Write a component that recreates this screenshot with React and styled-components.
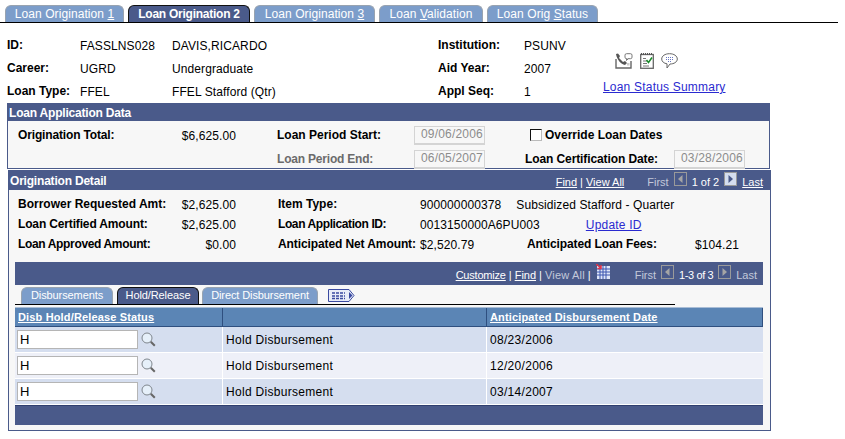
import React from 'react';
import styled, { createGlobalStyle } from 'styled-components';

const NAVY = '#4a5a8a';

const GlobalStyle = createGlobalStyle`
  html, body { margin: 0; padding: 0; background: #fff; }
  body { font-family: "Liberation Sans", Arial, sans-serif; font-size: 12px; color: #000; }
`;

const Page = styled.div`
  width: 845px;
  padding-top: 5px;
`;

const TabBar = styled.div`
  display: flex;
  width: ${({ $width }) => $width}px;
  height: ${({ $height }) => $height}px;
  box-sizing: border-box;
  padding-left: ${({ $pad }) => $pad}px;
  margin-top: ${({ $top }) => $top || 0}px;
  border-bottom: 1px solid #000;
  align-items: flex-end;
`;

const Tab = styled.div`
  width: ${({ $width }) => $width}px;
  margin-right: ${({ $gap }) => $gap}px;
  height: 100%;
  box-sizing: border-box;
  text-align: center;
  font-size: ${({ $small }) => ($small ? 11 : 12)}px;
  line-height: ${({ $small }) => ($small ? 15 : 16)}px;
  letter-spacing: ${({ $small, $active }) => ($small ? -0.1 : $active ? -0.25 : 0.08)}px;
  font-weight: ${({ $active, $small }) => ($active && !$small ? 'bold' : 'normal')};
  color: #fff;
  background: ${({ $active }) => ($active ? NAVY : '#7c9dca')};
  border: 1px solid ${({ $active }) => ($active ? '#111' : '#98a3b0')};
  border-bottom: none;
  border-radius: 6px 6px 0 0;
`;

const Header = styled.div`
  display: grid;
  grid-template-columns: 73px 92px 266px 86px 79px 180px;
  grid-template-rows: 22px 24px 22px;
  align-items: center;
  padding: 11px 0 1px 7px;
`;

const Label = styled.div`
  font-weight: bold;
  letter-spacing: ${({ $track }) => $track || 0}px;
  white-space: nowrap;
  color: ${({ $muted }) => ($muted ? '#6b6b6b' : '#000')};
  grid-column: ${({ $col }) => $col || 'auto'};
`;

const Value = styled.div`
  white-space: nowrap;
  letter-spacing: 0.1px;
  padding-top: 1px;
  text-align: ${({ $right }) => ($right ? 'right' : 'left')};
  grid-column: ${({ $col }) => $col || 'auto'};
`;

const Note = styled.span`
  margin-left: ${({ $gap }) => $gap}px;
`;

const DocLink = styled.a`
  color: #2a2ad0;
  text-decoration: underline;
  letter-spacing: 0.2px;
`;

const StatusBlock = styled.div`
  grid-column: 6;
  grid-row: 1 / span 3;
  align-self: start;
  display: flex;
  flex-direction: column;
  padding-top: 19px;
`;

const IconRow = styled.div`
  display: flex;
  align-items: center;
  gap: 7px;
  height: 16px;
  margin: 0 0 11px 12px;
`;

const Panel = styled.section`
  box-sizing: border-box;
  width: 763px;
  margin-left: ${({ $left }) => $left}px;
  margin-bottom: ${({ $bottom }) => $bottom || 0}px;
  height: ${({ $height }) => $height}px;
  background: #f7f7f7;
  border: 1px solid ${NAVY};
`;

const PanelHead = styled.div`
  display: flex;
  align-items: center;
  justify-content: space-between;
  height: ${({ $height }) => $height}px;
  padding: 0 7px 0 1px;
  background: ${NAVY};
  color: #fff;
  font-weight: bold;
  letter-spacing: -0.2px;
`;

const Nav = styled.div`
  display: flex;
  align-items: center;
  padding-top: 3px;
  font-size: 11px;
  font-weight: normal;
  letter-spacing: 0;
  color: #fff;
  white-space: nowrap;
`;

const NavLink = styled.span`
  text-decoration: underline;
  letter-spacing: ${({ $track }) => $track || 0}px;
`;

const NavDim = styled.span`
  color: #c3c9da;
  margin-left: ${({ $gap }) => $gap || 0}px;
  letter-spacing: ${({ $track }) => $track || 0}px;
`;

const NavCount = styled.span`
  letter-spacing: -0.4px;
`;

const Pipe = styled.span`
  margin: 0 3px;
`;

const NavArrow = styled.svg`
  display: block;
  margin: -7px 5px 0;
`;

const AppGrid = styled.div`
  display: grid;
  grid-template-columns: 160px 58px 41px 137px 71px 40px 149px 71px;
  grid-template-rows: 24px 24px;
  align-items: center;
  padding: 2px 0 0 10px;
`;

const DateBox = styled.div`
  box-sizing: border-box;
  width: 71px;
  height: 19px;
  line-height: 15px;
  padding-right: 1px;
  text-align: right;
  background: #f7f7f7;
  border: 2px solid #d4d4d4;
  border-width: 1px 1px 2px 1px;
  color: #8c8c8c;
  letter-spacing: 0.2px;
  grid-column: ${({ $col }) => $col};
`;

const CheckCell = styled.div`
  grid-column: 7 / span 2;
  display: flex;
  align-items: center;
  gap: 3px;
  padding-left: 5px;
  margin-top: -1px;
`;

const CheckBox = styled.span`
  display: block;
  box-sizing: border-box;
  width: 12px;
  height: 12px;
  background: #fff;
  border: 1px solid #111;
  border-right-color: #bbb;
  border-bottom-color: #bbb;
`;

const DetailGrid = styled.div`
  display: grid;
  grid-template-columns: 160px 58px 42px 142px 107px 160px 52px;
  grid-auto-rows: 20px;
  align-items: center;
  padding: 4px 0 0 9px;
  height: 68px;
`;

const GridArea = styled.div`
  margin: 0 0 0 6px;
  width: 748px;
`;

const GridBar = styled.div`
  display: flex;
  align-items: center;
  justify-content: flex-end;
  height: ${({ $height }) => $height}px;
  padding-right: 6px;
  background: ${NAVY};
  border-top: ${({ $line }) => ($line ? '1px solid #2f3f6f' : 'none')};
  box-sizing: border-box;
`;

const MoreIcon = styled.svg`
  display: block;
  align-self: center;
  margin-left: 10px;
`;

const Table = styled.div`
  margin-top: 2px;
`;

const HeadRow = styled.div`
  display: grid;
  grid-template-columns: 208px 264px 276px;
  height: 20px;
  background: #5b85b5;
  border-top: 1px solid #a9bdd6;
  border-bottom: 1px solid #2f4f7f;
  box-sizing: border-box;
`;

const HeadCell = styled.div`
  color: #fff;
  font-size: 11px;
  font-weight: bold;
  text-decoration: underline;
  letter-spacing: 0.15px;
  line-height: 18px;
  padding-left: 3px;
  border-right: 1px solid #2f4f7f;
`;

const Row = styled.div`
  display: grid;
  grid-template-columns: 208px 264px 276px;
  height: 26px;
  box-sizing: border-box;
  border-bottom: 1px solid #fff;
  background: ${({ $alt }) => ($alt ? '#eef0f8' : '#d5deef')};
`;

const Cell = styled.div`
  display: flex;
  align-items: center;
  padding-left: 3px;
  border-right: 1px solid #fff;
  letter-spacing: 0.3px;
  &:last-child { border-right: none; }
`;

const CodeBox = styled.div`
  box-sizing: border-box;
  width: 121px;
  height: 19px;
  margin-left: -1px;
  line-height: 17px;
  padding-left: 2px;
  background: #fff;
  border: 1px solid #b5b5b5;
  font-size: 13px;
`;

const LookupIcon = styled.svg`
  display: block;
  margin-left: 3px;
`;

const Lookup = () => (
  <LookupIcon width="15" height="15" viewBox="0 0 15 15">
    <circle cx="6" cy="6" r="5" fill="#e6f0fa" stroke="#7f868d" />
    <path d="M9.8 9.8 L13.8 13.8" stroke="#666" strokeWidth="2" />
  </LookupIcon>
);

const Arrow = ({ right, active }) => (
  <NavArrow width="13" height="14" viewBox="0 0 13 14">
    <rect x="0.5" y="0.5" width="12" height="13" fill={active ? '#d5deef' : NAVY} stroke="#9a9a9a" />
    <path d={right ? 'M4.5 3 L9 7 L4.5 11 Z' : 'M8.5 3 L4 7 L8.5 11 Z'} fill={active ? NAVY : '#a5a5a5'} />
  </NavArrow>
);

const MailIcon = () => (
  <svg width="18" height="16" viewBox="0 0 18 16">
    <path d="M1 6 V15 H16 V8" fill="#fff" stroke="#666" strokeWidth="1.4" />
    <path d="M1 1 L3 0.5 L5 3 L4 5 L8 9 L10 8 L12 10 L10 12 C6 11 2 7 1 1 Z" fill="#555" />
    <rect x="10" y="0.7" width="7" height="5" rx="1.5" fill="#fff" stroke="#777" />
    <path d="M11.5 5.5 V7.5 L13.5 5.5" fill="#fff" stroke="#777" />
    <rect x="12" y="10" width="2.5" height="2.5" fill="#ccc" />
  </svg>
);

const NotesIcon = () => (
  <svg width="14" height="16" viewBox="0 0 14 16">
    <rect x="0.7" y="1.5" width="12.6" height="13.8" fill="#fff" stroke="#666" strokeWidth="1.3" />
    <path d="M1 1 H13" stroke="#555" strokeDasharray="1 1" strokeWidth="2" />
    <path d="M3 5.5 H6 M3 8 H7 M3 10.5 H7 M3 13 H9" stroke="#777" />
    <path d="M6.5 7 L8.5 9.5 L12 4.5" fill="none" stroke="#1a8a2a" strokeWidth="1.5" />
  </svg>
);

const BubbleIcon = () => (
  <svg width="17" height="16" viewBox="0 0 17 16">
    <path d="M8.5 0.7 C13 0.7 16.3 3 16.3 6 C16.3 9 13 11 9 11 L6 15 L6 10.8 C3 10.4 0.7 8.6 0.7 6 C0.7 3 4 0.7 8.5 0.7 Z" fill="#fff" stroke="#666" />
    <path d="M5 4.5 H12 M5 6.5 H12 M7 8.5 H11" stroke="#6a78c0" strokeDasharray="1 1" />
  </svg>
);

const CustomizeSvg = styled.svg`
  display: block;
  margin: -8px 0 0 2px;
`;

const CustomizeIcon = () => (
  <CustomizeSvg width="14" height="15" viewBox="0 0 14 15">
    <rect x="1" y="2" width="13" height="13" fill="#dfe6f7" />
    <path d="M1 5 H14 M1 8 H14 M1 11 H14 M4 2 V15 M7 2 V15 M10 2 V15" stroke="#3a55b0" />
    <path d="M0 0 L5 4 M5 1 V4.5 H1.5" fill="none" stroke="#e0344a" strokeWidth="1.5" />
  </CustomizeSvg>
);

const TAB_MAIN = [
  { key: 'a', w: 119, g: 4, c: <>Loan Origination <u>1</u></> },
  { key: 'b', w: 122, g: 4, c: 'Loan Origination 2', active: true },
  { key: 'c', w: 121, g: 4, c: <>Loan Origination <u>3</u></> },
  { key: 'd', w: 104, g: 4, c: <>Loan <u>V</u>alidation</> },
  { key: 'e', w: 111, g: 0, c: <>Loan Orig <u>S</u>tatus</> },
];

const TAB_SUB = [
  { key: 'a', w: 92, g: 4, c: 'Disbursements' },
  { key: 'b', w: 82, g: 3, c: 'Hold/Release', active: true },
  { key: 'c', w: 116, g: 0, c: 'Direct Disbursement' },
];

const ROWS = [
  { date: '08/23/2006' },
  { date: '12/20/2006', alt: true },
  { date: '03/14/2007' },
];

export default function App() {
  return (
    <Page>
      <GlobalStyle />
      <TabBar $width={838} $height={18} $pad={5}>
        {TAB_MAIN.map((t) => (
          <Tab key={t.key} $width={t.w} $gap={t.g} $active={t.active}>{t.c}</Tab>
        ))}
      </TabBar>

      <Header>
        <Label>ID:</Label>
        <Value>FASSLNS028</Value>
        <Value>DAVIS,RICARDO</Value>
        <Label>Institution:</Label>
        <Value>PSUNV</Value>
        <StatusBlock>
          <IconRow>
            <MailIcon />
            <NotesIcon />
            <BubbleIcon />
          </IconRow>
          <div><DocLink>Loan Status Summary</DocLink></div>
        </StatusBlock>
        <Label>Career:</Label>
        <Value>UGRD</Value>
        <Value>Undergraduate</Value>
        <Label>Aid Year:</Label>
        <Value>2007</Value>
        <Label>Loan Type:</Label>
        <Value>FFEL</Value>
        <Value>FFEL Stafford (Qtr)</Value>
        <Label>Appl Seq:</Label>
        <Value>1</Value>
      </Header>

      <Panel $left={7} $height={66} $bottom={1}>
        <PanelHead $height={17}>Loan Application Data</PanelHead>
        <AppGrid>
          <Label $col="1" $track={-0.15}>Origination Total:</Label>
          <Value $col="2" $right>$6,625.00</Value>
          <Label $col="4">Loan Period Start:</Label>
          <DateBox $col="5">09/06/2006</DateBox>
          <CheckCell>
            <CheckBox />
            <Label>Override Loan Dates</Label>
          </CheckCell>
          <Label $col="4" $muted $track={-0.2}>Loan Period End:</Label>
          <DateBox $col="5">06/05/2007</DateBox>
          <Label $col="7" $track={-0.1}>Loan Certification Date:</Label>
          <DateBox $col="8">03/28/2006</DateBox>
        </AppGrid>
      </Panel>

      <Panel $left={8} $height={261}>
        <PanelHead $height={19}>
          Origination Detail
          <Nav>
            <NavLink>Find</NavLink>
            <Pipe>|</Pipe>
            <NavLink>View All</NavLink>
            <NavDim $gap={23}>First</NavDim>
            <Arrow />
            1 of 2
            <Arrow right active />
            <NavLink>Last</NavLink>
          </Nav>
        </PanelHead>
        <DetailGrid>
          <Label>Borrower Requested Amt:</Label>
          <Value $col="2" $right>$2,625.00</Value>
          <Label $col="4">Item Type:</Label>
          <Value $col="5 / span 3">900000000378<Note $gap={15}>Subsidized Stafford - Quarter</Note></Value>
          <Label $track={-0.15}>Loan Certified Amount:</Label>
          <Value $col="2" $right>$2,625.00</Value>
          <Label $col="4" $track={-0.4}>Loan Application ID:</Label>
          <Value $col="5 / span 3">0013150000A6PU003<Note $gap={46}><DocLink>Update ID</DocLink></Note></Value>
          <Label $track={-0.35}>Loan Approved Amount:</Label>
          <Value $col="2" $right>$0.00</Value>
          <Label $col="4" $track={-0.1}>Anticipated Net Amount:</Label>
          <Value $col="5">$2,520.79</Value>
          <Label $col="6" $track={-0.1}>Anticipated Loan Fees:</Label>
          <Value $col="7" $right>$104.21</Value>
        </DetailGrid>

        <GridArea>
          <GridBar $height={23}>
            <Nav>
              <NavLink $track={-0.2}>Customize</NavLink>
              <Pipe>|</Pipe>
              <NavLink>Find</NavLink>
              <Pipe>|</Pipe>
              <NavDim $track={0.2}>View All</NavDim>
              <Pipe>|</Pipe>
              <CustomizeIcon />
              <NavDim $gap={25}>First</NavDim>
              <Arrow />
              <NavCount>1-3 of 3</NavCount>
              <Arrow right />
              <NavDim>Last</NavDim>
            </Nav>
          </GridBar>
          <TabBar $width={660} $height={18} $pad={6} $top={2}>
            {TAB_SUB.map((t) => (
              <Tab key={t.key} $small $width={t.w} $gap={t.g} $active={t.active}>{t.c}</Tab>
            ))}
            <MoreIcon width="27" height="15" viewBox="0 0 27 15">
              <path d="M0.5 1.5 H21 L26 7.5 L21 13.5 H0.5 Z" fill="#e8ecf8" stroke="#3a4aa0" />
              <path d="M4 5 H17 M4 8 H17 M4 10.5 H17" stroke="#3a4aa0" strokeWidth="1.5" strokeDasharray="3 1" />
              <path d="M21 4 L24.5 7.5 L21 11 Z" fill="#3a4aa0" />
            </MoreIcon>
          </TabBar>
          <Table>
            <HeadRow>
              <HeadCell>Disb Hold/Release Status</HeadCell>
              <HeadCell />
              <HeadCell>Anticipated Disbursement Date</HeadCell>
            </HeadRow>
            {ROWS.map((r) => (
              <Row key={r.date} $alt={r.alt}>
                <Cell>
                  <CodeBox>H</CodeBox>
                  <Lookup />
                </Cell>
                <Cell>Hold Disbursement</Cell>
                <Cell>{r.date}</Cell>
              </Row>
            ))}
            <GridBar $height={20} $line />
          </Table>
        </GridArea>
      </Panel>
    </Page>
  );
}
